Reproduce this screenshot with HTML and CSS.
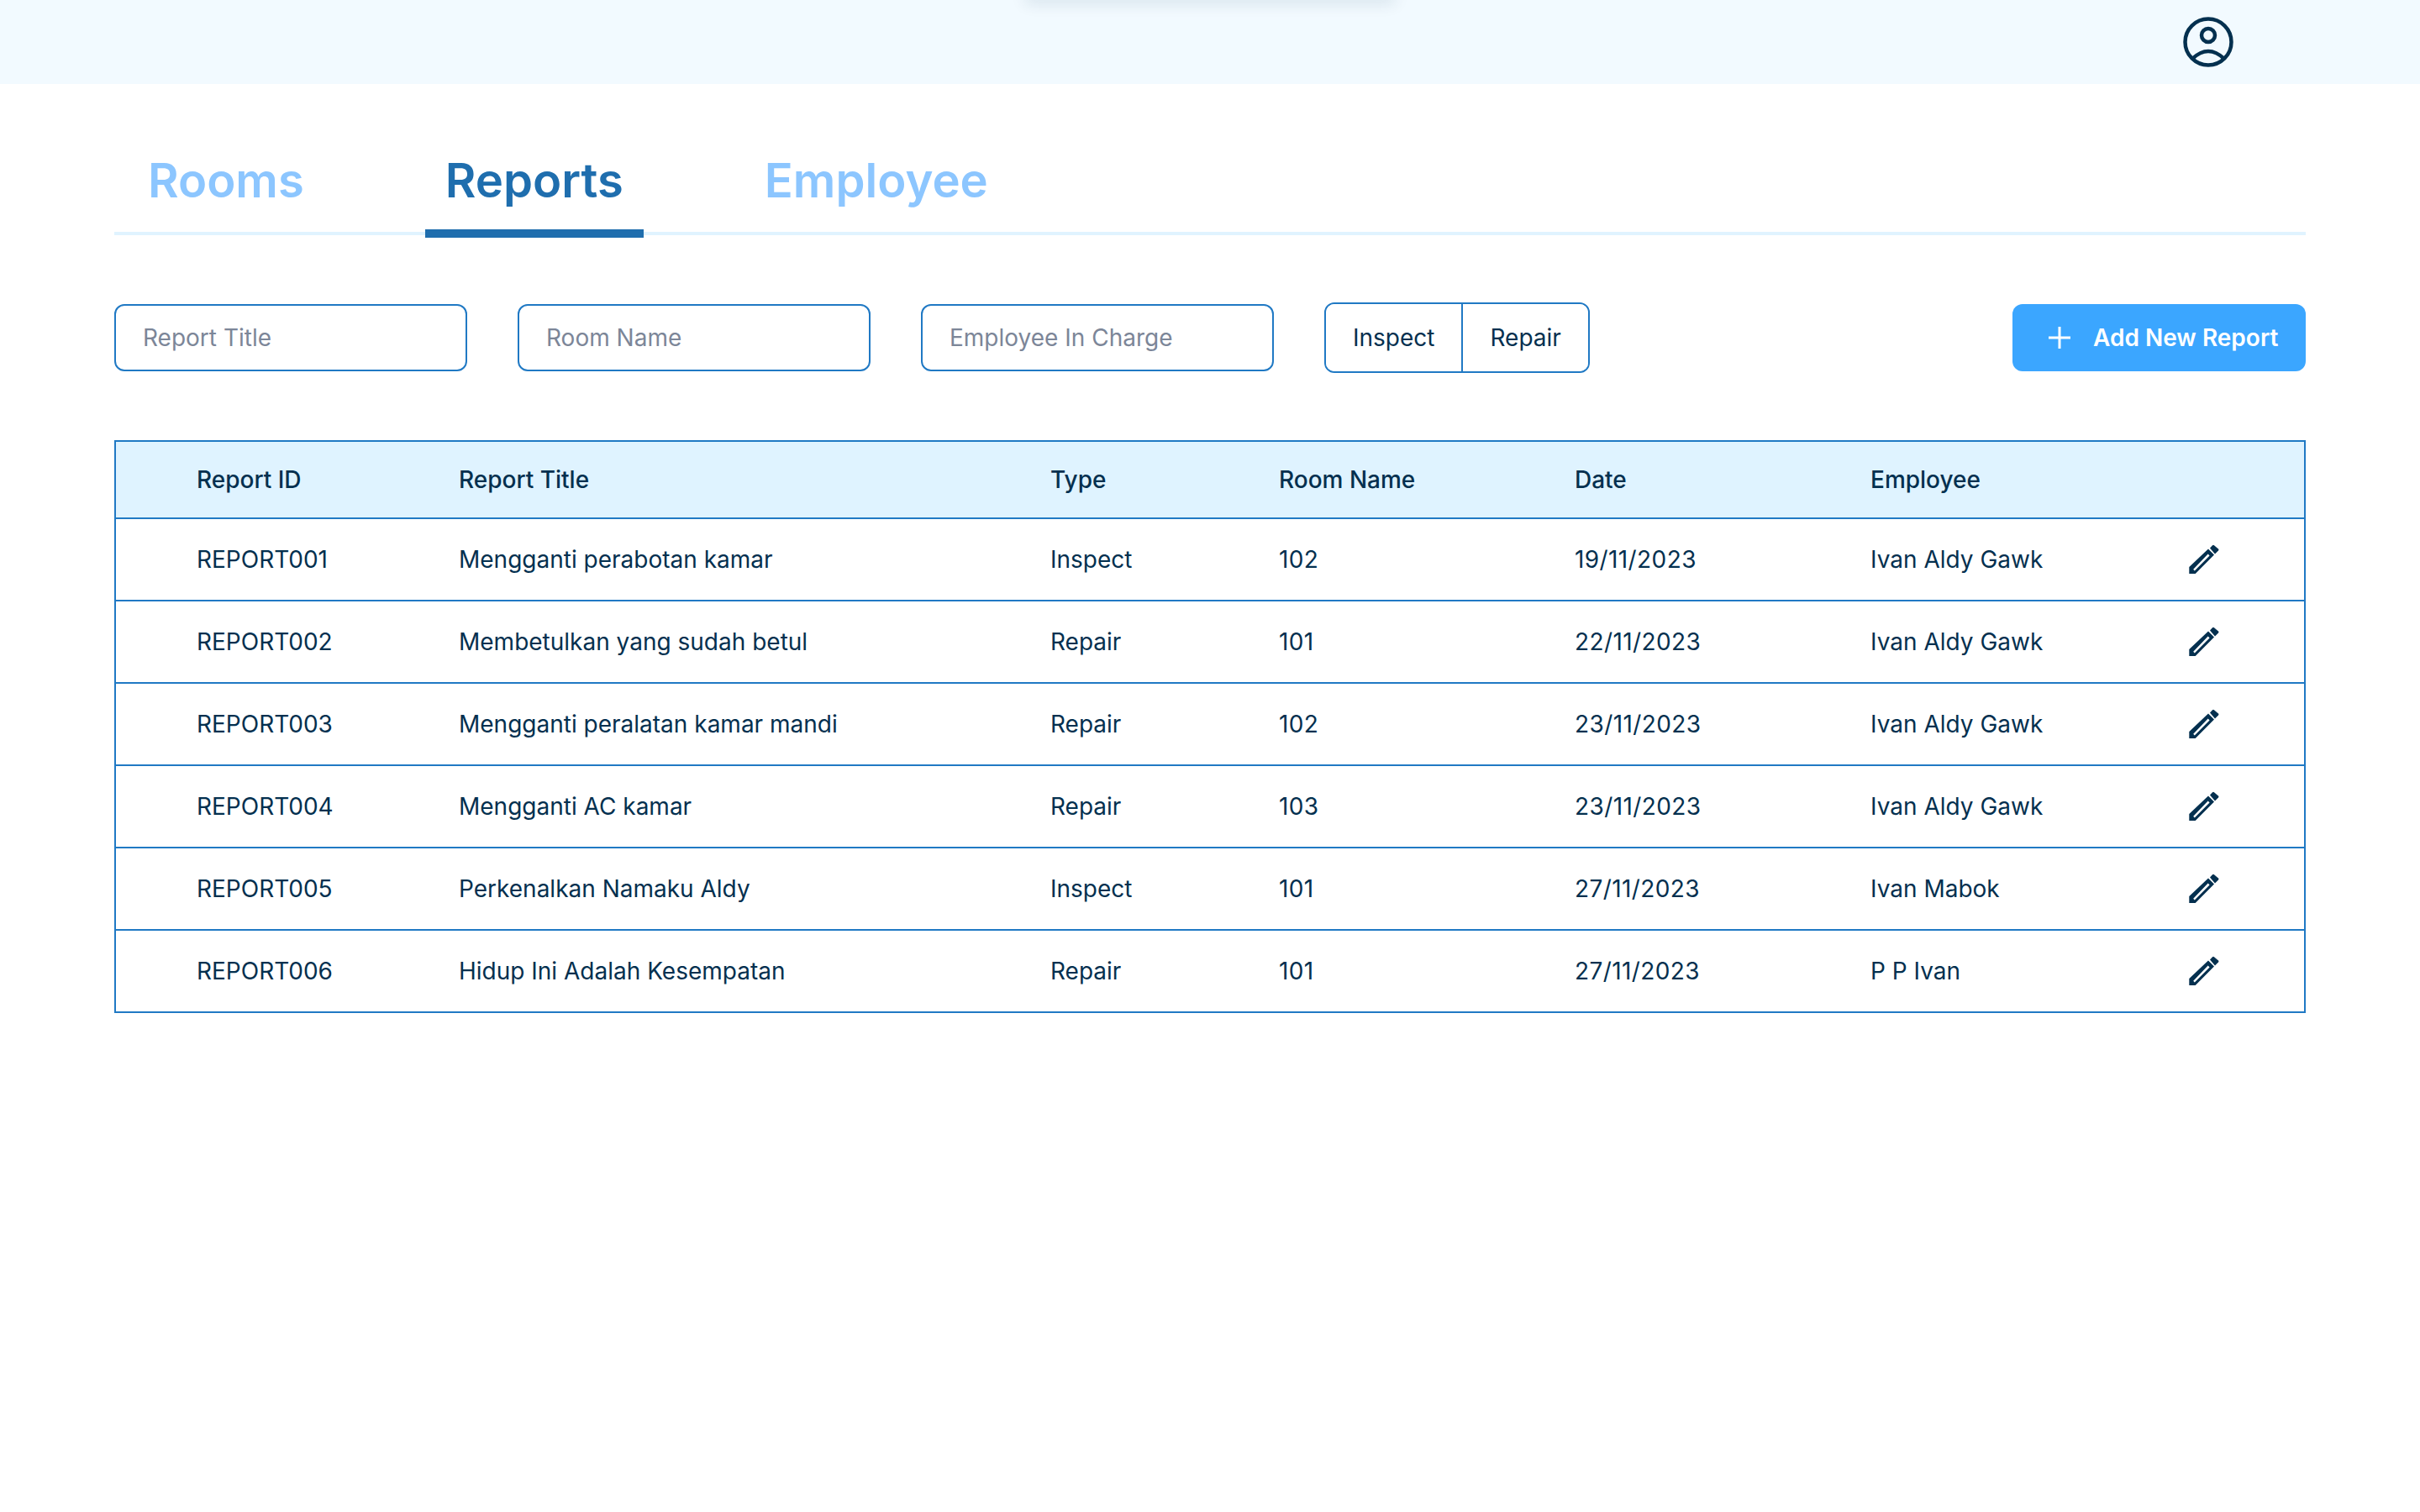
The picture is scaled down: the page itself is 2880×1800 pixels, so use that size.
FILE: index.html
```html
<!DOCTYPE html>
<html lang="en">
<head>
    <meta charset="UTF-8">
    <title>Reports</title>
    <link rel="stylesheet" href="styles.css">
</head>
<body>
    <header class="topbar">
        <div class="topbar-glow"></div>
        <svg class="user-icon" viewBox="0 0 60 60" fill="none" stroke="#04304f" stroke-width="4.5">
            <circle cx="30" cy="30" r="27.5"/>
            <circle cx="30" cy="22" r="8"/>
            <path d="M11 50 Q30 32 49 50"/>
        </svg>
    </header>
    <main class="content">
        <nav class="tabs">
            <a class="tab" href="#">Rooms</a>
            <a class="tab active" href="#">Reports</a>
            <a class="tab" href="#">Employee</a>
        </nav>
        <div class="filters">
            <input class="filter-input" type="text" placeholder="Report Title">
            <input class="filter-input" type="text" placeholder="Room Name">
            <input class="filter-input" type="text" placeholder="Employee In Charge">
            <div class="toggle">
                <button class="toggle-btn">Inspect</button>
                <button class="toggle-btn">Repair</button>
            </div>
            <button class="add-btn">
                <svg class="plus-icon" viewBox="0 0 28 28" fill="none" stroke="#fff" stroke-width="3"><path d="M14 1V27M1 14H27"/></svg>
                Add New Report
            </button>
        </div>
        <table class="report-table">
            <thead>
                <tr>
                    <th class="col-id">Report ID</th>
                    <th class="col-title">Report Title</th>
                    <th class="col-type">Type</th>
                    <th class="col-room">Room Name</th>
                    <th class="col-date">Date</th>
                    <th class="col-emp">Employee</th>
                    <th></th>
                </tr>
            </thead>
            <tbody>
                <tr>
                    <td>REPORT001</td><td>Mengganti perabotan kamar</td><td>Inspect</td><td class="num">102</td><td class="num">19/11/2023</td><td>Ivan Aldy Gawk</td>
                    <td class="edit"><svg class="pencil" viewBox="0 0 36 36"><use href="#pencil"/></svg></td>
                </tr>
                <tr>
                    <td>REPORT002</td><td>Membetulkan yang sudah betul</td><td>Repair</td><td class="num">101</td><td class="num">22/11/2023</td><td>Ivan Aldy Gawk</td>
                    <td class="edit"><svg class="pencil" viewBox="0 0 36 36"><use href="#pencil"/></svg></td>
                </tr>
                <tr>
                    <td>REPORT003</td><td>Mengganti peralatan kamar mandi</td><td>Repair</td><td class="num">102</td><td class="num">23/11/2023</td><td>Ivan Aldy Gawk</td>
                    <td class="edit"><svg class="pencil" viewBox="0 0 36 36"><use href="#pencil"/></svg></td>
                </tr>
                <tr>
                    <td>REPORT004</td><td>Mengganti AC kamar</td><td>Repair</td><td class="num">103</td><td class="num">23/11/2023</td><td>Ivan Aldy Gawk</td>
                    <td class="edit"><svg class="pencil" viewBox="0 0 36 36"><use href="#pencil"/></svg></td>
                </tr>
                <tr>
                    <td>REPORT005</td><td>Perkenalkan Namaku Aldy</td><td>Inspect</td><td class="num">101</td><td class="num">27/11/2023</td><td>Ivan Mabok</td>
                    <td class="edit"><svg class="pencil" viewBox="0 0 36 36"><use href="#pencil"/></svg></td>
                </tr>
                <tr>
                    <td>REPORT006</td><td>Hidup Ini Adalah Kesempatan</td><td>Repair</td><td class="num">101</td><td class="num">27/11/2023</td><td>P P Ivan</td>
                    <td class="edit"><svg class="pencil" viewBox="0 0 36 36"><use href="#pencil"/></svg></td>
                </tr>
            </tbody>
        </table>
    </main>
    <svg width="0" height="0" class="defs">
        <symbol id="pencil" viewBox="0 0 36 36">
            <path fill="#04304f" fill-rule="evenodd" d="M.3 27 L23 5.500 L30 12.500 L7.700 35 L.3 35 Z M5.200 29.800 L6.800 31.400 L24.600 13.400 L22.700 11.500 Z"/>
            <path fill="#04304f" d="M25 4.500 L28 1.200 Q29 .4 30 1.200 L35 5.500 Q36 6.500 35 7.500 L31 11.500 Z"/>
        </symbol>
    </svg>
</body>
</html>
```

FILE: styles.css
```css
body {
    font-family: 'Inter', sans-serif;
    margin: 0;
    padding: 0;
    background: #fff;
    color: #04304f;
    min-height: 1800px;
}

.topbar {
    height: 100px;
    background: #f2faff;
    display: flex;
    justify-content: flex-end;
    align-items: flex-start;
    padding-right: 222px;
    position: relative;
    overflow: hidden;
}

.topbar-glow {
    position: absolute;
    top: -14px;
    left: 1220px;
    width: 440px;
    height: 14px;
    box-shadow: 0 4px 18px rgba(4, 48, 79, 0.12);
}

.user-icon {
    width: 60px;
    height: 60px;
    margin-top: 20px;
}

.content {
    padding: 0 136px;
}

.tabs {
    display: flex;
    gap: 120px;
    height: 180px;
    padding-left: 16px;
    border-bottom: 4px solid #e0f3ff;
    box-sizing: border-box;
    margin-bottom: 80px;
}

.tab {
    padding: 81px 24px 0;
    height: 92px;
    font-size: 56.2px;
    line-height: 68px;
    font-weight: 600;
    color: #8cc6ff;
    text-decoration: none;
}

.tab.active {
    color: #1f6eae;
    border-bottom: 10px solid #1f6eae;
}

.filters {
    display: flex;
    align-items: center;
    gap: 60px;
    height: 84px;
    margin-bottom: 80px;
}

.filter-input {
    width: 420px;
    height: 80px;
    box-sizing: border-box;
    padding: 0 32px;
    border: 2px solid #2079c4;
    border-radius: 12px;
    font-family: inherit;
    font-size: 28px;
    color: #04304f;
    background: #fff;
    outline: none;
}

.filter-input::placeholder {
    color: #7c8698;
    opacity: 1;
}

.toggle {
    display: flex;
    height: 84px;
    box-sizing: border-box;
    border: 2px solid #2079c4;
    border-radius: 12px;
    overflow: hidden;
}

.toggle-btn {
    border: 0;
    background: #fff;
    padding: 0 32px;
    font-family: inherit;
    font-size: 28px;
    color: #04304f;
}

.toggle-btn + .toggle-btn {
    border-left: 2px solid #2079c4;
}

.add-btn {
    margin-left: auto;
    width: 349px;
    height: 80px;
    display: flex;
    align-items: center;
    gap: 26px;
    padding: 0 0 0 42px;
    box-sizing: border-box;
    border: 0;
    border-radius: 12px;
    background: #3ba6ff;
    color: #fff;
    font-family: inherit;
    font-size: 28px;
    font-weight: 600;
}

.plus-icon {
    width: 28px;
    height: 28px;
}

.report-table {
    width: 100%;
    table-layout: fixed;
    border-collapse: collapse;
    border: 2px solid #2079c4;
    font-size: 28px;
}

.report-table th {
    height: 92px;
    padding: 0;
    background: #dff3ff;
    font-weight: 500;
    text-align: left;
    box-sizing: border-box;
}

.report-table td {
    height: 96px;
    padding: 0;
    border-top: 2px solid #2079c4;
}

.report-table th:first-child,
.report-table td:first-child {
    padding-left: 96px;
}

.report-table .num {
    letter-spacing: 0.4px;
}

.col-id { width: 409px; }
.col-title { width: 704px; }
.col-type { width: 272px; }
.col-room { width: 352px; }
.col-date { width: 352px; }
.col-emp { width: 376px; }

.edit {
    line-height: 0;
}

.pencil {
    display: block;
    width: 36px;
    height: 36px;
    margin-left: 3px;
}

.defs {
    position: absolute;
}
```
